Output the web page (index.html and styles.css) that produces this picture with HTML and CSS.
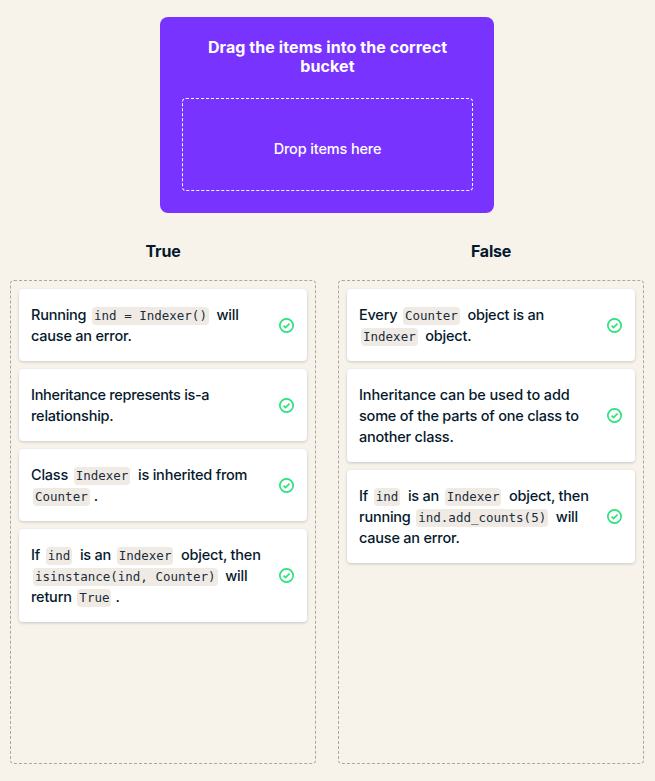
FILE: index.html
```html
<!DOCTYPE html>
<html lang="en">
<head>
<meta charset="utf-8">
<title>Drag the items into the correct bucket</title>
<link rel="stylesheet" href="styles.css">
</head>
<body>
<svg class="defs" width="0" height="0" aria-hidden="true">
  <symbol id="check" viewBox="0 0 16 16">
    <circle cx="8" cy="8" r="7.1" fill="none" stroke="#2be37b" stroke-width="1.8"/>
    <path d="M4.9 8.2 7 10.3 11.2 6.1" fill="none" stroke="#2be37b" stroke-width="1.8"/>
  </symbol>
</svg>
<main class="exercise">
  <section class="source">
    <h1 class="source-title">Drag the items into the correct<br>bucket</h1>
    <div class="dropzone">Drop items here</div>
  </section>
  <div class="buckets">
    <section class="column">
      <h2 class="column-title">True</h2>
      <div class="bucket">
        <article class="card"><p class="text">Running <code>ind = Indexer()</code> will<br>cause an error.</p><svg class="icon"><use href="#check"/></svg></article>
        <article class="card"><p class="text"><span class="snug">Inheritance represents is-a</span><br>relationship.</p><svg class="icon"><use href="#check"/></svg></article>
        <article class="card"><p class="text">Class <code>Indexer</code> is inherited from<br><code>Counter</code>.</p><svg class="icon"><use href="#check"/></svg></article>
        <article class="card"><p class="text">If <code>ind</code> is an <code>Indexer</code> object, then<br><code>isinstance(ind, Counter)</code> will<br>return <code>True</code>.</p><svg class="icon"><use href="#check"/></svg></article>
      </div>
    </section>
    <section class="column">
      <h2 class="column-title">False</h2>
      <div class="bucket">
        <article class="card"><p class="text">Every <code>Counter</code> object is an<br><code>Indexer</code> object.</p><svg class="icon"><use href="#check"/></svg></article>
        <article class="card"><p class="text"><span class="loose">Inheritance can be used to add</span><br>some of the parts of one class to<br>another class.</p><svg class="icon"><use href="#check"/></svg></article>
        <article class="card"><p class="text">If <code>ind</code> is an <code>Indexer</code> object, then<br>running <code>ind.add_counts(5)</code> will<br>cause an error.</p><svg class="icon"><use href="#check"/></svg></article>
      </div>
    </section>
  </div>
</main>
</body>
</html>
```
FILE: styles.css
```css
* { box-sizing: border-box; }
body {
  margin: 0;
  background: #f7f3eb;
  color: #05192d;
  font-family: Inter, "Liberation Sans", sans-serif;
  font-size: 15px;
  line-height: 21px;
}
.defs { position: absolute; }
.exercise { padding: 17px 11px 17px 10px; }
.source {
  width: 334px;
  height: 196px;
  margin: 0 auto;
  padding: 21px 21px 22px 22px;
  border-radius: 8px;
  background: #7933ff;
  color: #fff;
  text-align: center;
}
.source-title {
  margin: 0 0 22px;
  font-size: 16px;
  font-weight: 700;
  line-height: 19px;
  letter-spacing: .08px;
}
.dropzone {
  display: flex;
  align-items: center;
  justify-content: center;
  height: 93px;
  padding-top: 8px;
  border: 1px dashed #fff;
  border-radius: 4px;
  font-size: 14.5px;
  font-weight: 500;
  letter-spacing: -.15px;
}
.buckets {
  display: grid;
  grid-template-columns: 1fr 1fr;
  gap: 22px;
  margin-top: 28px;
}
.column-title {
  margin: 0 0 18px;
  font-size: 16px;
  font-weight: 700;
  line-height: 21px;
  letter-spacing: -.2px;
  text-align: center;
}
.bucket {
  display: flex;
  flex-direction: column;
  gap: 8px;
  height: 484px;
  padding: 8px;
  border: 1px dashed #aaa6a0;
  border-radius: 4px;
}
.card {
  display: flex;
  align-items: center;
  justify-content: space-between;
  padding: 15px 13px 15px 12px;
  border-radius: 4px;
  background: #fff;
  box-shadow: 0 1px 3px rgba(5, 25, 45, .2);
}
.text {
  margin: 0;
  white-space: nowrap;
  font-size: 14.5px;
  font-weight: 450;
  letter-spacing: -.22px;
}
.snug { letter-spacing: -.31px; }
.loose { letter-spacing: -.12px; }
.text code {
  margin: 0 4px 0 2px;
  padding: 1px 2px 2px;
  border-radius: 4px;
  background: #efebe4;
  color: #1b2d3c;
  font-family: "DejaVu Sans Mono", monospace;
  font-size: 12.5px;
  line-height: 0;
  letter-spacing: 0;
}
.icon { flex: none; width: 15px; height: 15px; }
```
